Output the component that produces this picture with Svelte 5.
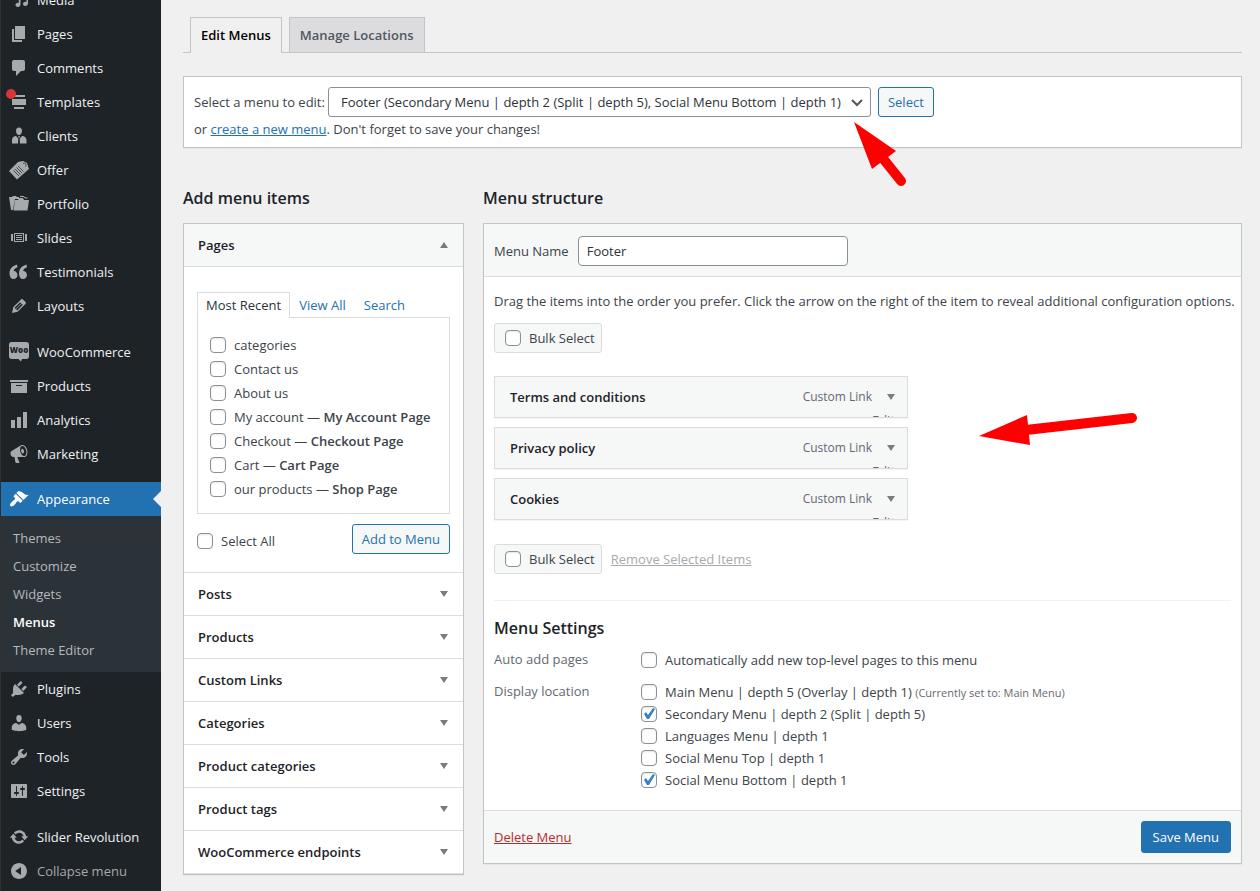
<script lang="ts">
    type MenuEntry = { label: string; icon: string; gap?: boolean; notice?: boolean }

    const icons: Record<string, string> = {
        media: "M9 5.5L19 3v10.2c0 1.5-1.100 2.800-2.700 2.800-1.300 0-2.300-.8-2.300-2s1-2.200 2.300-2.200c.5 0 .9.100 1.200.300V6.500l-6 1.500v6.200c0 1.500-1.100 2.800-2.600 2.800-1.300 0-2.400-.8-2.400-2s1-2.200 2.300-2.200c.5 0 .9.100 1.200.300z",
        pages: "M6 15V2h10v13H6zm-1 1h8v2H3V5h2v11z",
        comments: "M5 2h9c1.1 0 2 .9 2 2v7c0 1.1-.9 2-2 2h-2l-5 5v-5H5c-1.1 0-2-.9-2-2V4c0-1.1.9-2 2-2z",
        templates: "M5 3h11v2H5zM3 7h14v6H3zM5 15h10v2H5z",
        clients: "M10 1.500c2 0 3 1.500 3 3.400S11.800 9 10 9 7 6.800 7 4.900s1-3.400 3-3.400zM7 10l2.300 2.500L9 17.500H3V14c0-2.500 2-4 4-4zm6 0c2 0 4.500 1.500 4.500 4v3.500H11l-.3-5zm-3.800 0h1.600l-.4 1.800h-.8z",
        slides: "M2 6h2v7H2zM16 6h2v7h-2zM5 5h10v9H5zm1 1v7h8V6zm1 1h6v1H7zm0 2h6v1H7zm0 2h6v1H7z",
        testimonials: "M8 2.500C3 4 .5 7 .5 11.500c0 3.500 1.500 5.500 4 5.500 2.400 0 4-1.700 4-4S6.900 9 4.700 9c.3-2 1.500-3 3.800-3.800zM17.500 2.500C12.500 4 10 7 10 11.500c0 3.500 1.500 5.500 4 5.500 2.400 0 4-1.700 4-4s-1.600-4-3.800-4c.3-2 1.500-3 3.800-3.800z",
        layouts: "M13.89 3.39l2.71 2.72c.46.46.42 1.24.03 1.64l-8.01 8.02-5.56 1.16 1.16-5.58s7.6-7.63 7.99-8.03c.39-.39 1.22-.39 1.68.07zm-2.73 2.79l-5.59 5.61 1.11 1.11 5.54-5.65zm-2.97 8.23l5.58-5.6-1.07-1.08-5.59 5.6z",
        products: "M19 4v2H1V4h18zM2 7h16v10H2V7zm11 3V9H7v1h6z",
        analytics: "M18 18V2h-4v16h4zm-6 0V7H8v11h4zm-6 0v-8H2v8h4z",
        marketing: "M18.15 5.94c.46 1.62.38 3.22-.02 4.48-.42 1.28-1.26 2.18-2.3 2.48-.16.06-.26.06-.4.06-.06.02-.12.02-.18.02-.06.02-.14.02-.22.02h-6.8l2.22 5.5c.02.14-.06.26-.14.34-.08.1-.24.16-.34.16H6.95c-.1 0-.26-.06-.34-.16-.08-.08-.16-.2-.14-.34l-1-5.5H4.25l-.02-.02c-.5.06-1.08-.18-1.54-.62s-.88-1.08-1.06-1.88c-.24-.8-.2-1.56-.02-2.2.18-.62.58-1.08 1.06-1.3l.02-.02 9-5.4c.1-.06.18-.1.24-.16.06-.04.14-.08.24-.12.16-.08.28-.12.5-.18 1.04-.3 2.24.1 3.22.98s1.84 2.24 2.26 3.86zm-2.58 5.98h-.02c.4-.1.74-.34 1.04-.7.58-.7.86-1.76.86-3.04 0-.64-.1-1.3-.28-1.98-.34-1.36-1.02-2.5-1.78-3.24s-1.68-1.1-2.46-.88c-.82.22-1.4.96-1.7 2-.32 1.04-.28 2.36.06 3.72.38 1.36 1 2.5 1.8 3.24.78.74 1.62 1.1 2.48.88zm-2.54-7.08c.22-.04.42-.02.62.04.38.16.76.48 1.02 1s.42 1.2.42 1.78c0 .3-.04.56-.12.8-.18.48-.44.84-.86.94-.34.1-.8-.06-1.14-.4s-.64-.86-.78-1.5c-.18-.62-.12-1.24.02-1.72s.48-.84.82-.94z",
        appearance: "M14.48 11.06L7.41 3.99l1.5-1.5c.5-.56 2.3-.47 3.51.32 1.21.8 1.43 1.28 2.91 2.1 1.18.64 2.45 1.26 4.45.85zm-.71.71L6.7 4.7 4.93 6.47c-.39.39-.39 1.02 0 1.41l1.06 1.06c.39.39.39 1.03 0 1.42-.6.6-1.43 1.11-2.21 1.69-.35.26-.7.53-1.01.84C1.43 14.23.4 16.08 1.4 17.07c.99 1 2.84-.03 4.18-1.36.31-.31.58-.66.85-1.02.57-.78 1.08-1.61 1.69-2.21.39-.39 1.02-.39 1.41 0l1.06 1.06c.39.39 1.02.39 1.41 0z",
        plugins: "M13.11 4.36L9.87 7.6 8 5.73l3.24-3.24c.35-.34 1.05-.2 1.56.32.52.51.66 1.21.31 1.55zm-8 1.77l.91-1.12 9.01 9.01-1.19.84c-.71.71-2.63 1.16-3.82 1.16H6.14L4.9 17.26c-.59.59-1.54.59-2.12 0-.59-.58-.59-1.53 0-2.12l1.24-1.24v-3.88c0-1.13.4-3.19 1.09-3.89zm7.26 3.97l3.24-3.24c.34-.35 1.04-.21 1.55.31.52.51.66 1.21.31 1.55l-3.24 3.25z",
        users: "M10 9.25c-2.27 0-2.73-3.44-2.73-3.44C7 4.02 7.82 2 9.97 2c2.16 0 2.98 2.02 2.71 3.81 0 0-.41 3.44-2.68 3.44zm0 2.57L12.72 10c2.39 0 4.52 2.33 4.52 4.53v2.49s-3.65 1.13-7.24 1.13c-3.65 0-7.24-1.13-7.24-1.13v-2.49c0-2.25 1.94-4.48 4.47-4.48z",
        tools: "M16.68 9.77c-1.34 1.34-3.3 1.67-4.95.99l-5.41 6.52c-.99.99-2.59.99-3.58 0s-.99-2.59 0-3.57l6.52-5.42c-.68-1.65-.35-3.61.99-4.95 1.28-1.28 3.12-1.62 4.72-1.06l-2.89 2.89 2.82 2.82 2.86-2.87c.53 1.58.18 3.39-1.08 4.65zM3.81 16.21c.4.39 1.04.39 1.43 0 .4-.4.4-1.04 0-1.43-.39-.4-1.03-.4-1.43 0-.39.39-.39 1.03 0 1.43z",
        settings: "M18 16V4c0-.55-.45-1-1-1H3c-.55 0-1 .45-1 1v12c0 .55.45 1 1 1h14c.55 0 1-.45 1-1zM8 11h1c.55 0 1 .45 1 1s-.45 1-1 1H8v1.5c0 .28-.22.5-.5.5s-.5-.22-.5-.5V13H6c-.55 0-1-.45-1-1s.45-1 1-1h1V5.5c0-.28.22-.5.5-.5s.5.22.5.5V11zm5-2h-1c-.55 0-1-.45-1-1s.45-1 1-1h1V5.5c0-.28.22-.5.5-.5s.5.22.5.5V7h1c.55 0 1 .45 1 1s-.45 1-1 1h-1v5.5c0 .28-.22.5-.5.5s-.5-.22-.5-.5V9z",
        revolution: "M10.2 3.28c3.53 0 6.43 2.61 6.92 6h2.08l-3.5 4-3.5-4h2.32c-.45-1.97-2.21-3.45-4.32-3.45-1.45 0-2.73.71-3.54 1.78L4.95 5.66C6.23 4.2 8.11 3.28 10.2 3.28zm-.4 13.44c-3.52 0-6.43-2.61-6.92-6H.8l3.5-4c1.17 1.33 2.33 2.67 3.5 4H5.48c.45 1.97 2.21 3.45 4.32 3.45 1.45 0 2.73-.71 3.54-1.78l1.71 1.95c-1.28 1.46-3.15 2.38-5.25 2.38z",
        collapse: "M10 2c4.400 0 8 3.600 8 8s-3.600 8-8 8-8-3.600-8-8 3.600-8 8-8zm2 12V6l-5.800 4z",
    }

    const topEntries: MenuEntry[] = [
        { label: "Media", icon: "media" },
        { label: "Pages", icon: "pages" },
        { label: "Comments", icon: "comments" },
        { label: "Templates", icon: "templates", notice: true },
        { label: "Clients", icon: "clients" },
        { label: "Offer", icon: "offer" },
        { label: "Portfolio", icon: "portfolio" },
        { label: "Slides", icon: "slides" },
        { label: "Testimonials", icon: "testimonials" },
        { label: "Layouts", icon: "layouts" },
        { label: "WooCommerce", icon: "woo", gap: true },
        { label: "Products", icon: "products" },
        { label: "Analytics", icon: "analytics" },
        { label: "Marketing", icon: "marketing" },
    ]

    const bottomEntries: MenuEntry[] = [
        { label: "Plugins", icon: "plugins" },
        { label: "Users", icon: "users" },
        { label: "Tools", icon: "tools" },
        { label: "Settings", icon: "settings" },
        { label: "Slider Revolution", icon: "revolution", gap: true },
    ]

    const submenu = ["Themes", "Customize", "Widgets", "Menus", "Theme Editor"]

    const pages = [
        { name: "categories" },
        { name: "Contact us" },
        { name: "About us" },
        { name: "My account", role: "My Account Page" },
        { name: "Checkout", role: "Checkout Page" },
        { name: "Cart", role: "Cart Page" },
        { name: "our products", role: "Shop Page" },
    ]

    const sections = [
        "Posts",
        "Products",
        "Custom Links",
        "Categories",
        "Product categories",
        "Product tags",
        "WooCommerce endpoints",
    ]

    const items = ["Terms and conditions", "Privacy policy", "Cookies"]

    let menuName = $state("Footer")
    let locations = $state([
        { label: "Main Menu | depth 5 (Overlay | depth 1)", note: "(Currently set to: Main Menu)", checked: false },
        { label: "Secondary Menu | depth 2 (Split | depth 5)", note: "", checked: true },
        { label: "Languages Menu | depth 1", note: "", checked: false },
        { label: "Social Menu Top | depth 1", note: "", checked: false },
        { label: "Social Menu Bottom | depth 1", note: "", checked: true },
    ])
</script>

{#snippet icon(name: string)}
    <svg class="icon" viewBox="0 0 20 20" aria-hidden="true">
        {#if name === "woo"}
            <path d="M2.500 0h15C19 0 20 1 20 2.500v12c0 1.500-1 2.500-2.500 2.500H13l-1 2.500L9.500 17h-7C1 17 0 16 0 14.500v-12C0 1 1 0 2.500 0z" />
            <text x="10" y="11" text-anchor="middle">Woo</text>
        {:else if name === "offer"}
            <path d="M9 2l5-1 4 2 2 6L8 19.500 0 11z" />
            <path class="line" d="M4.500 10.500l5.500 5.500M6 9l5.500 5.500M7.500 7.500L13 13M9 6l5.500 5.500M14 3.500c2.500-1 4 .5 2.500 3" />
        {:else if name === "portfolio"}
            <path d="M0 3h3l1-1h3l1 1h2v2H6L4 16H2zM6 6h3l1-2h4l1 2h5l-1.500 10.500h-14z" />
            <path class="outline" d="M11 2.500h4l1 1.500h2.500" />
        {:else}
            <path fill-rule="evenodd" d={icons[name]} />
        {/if}
    </svg>
{/snippet}

{#snippet entryList(entries: MenuEntry[])}
    {#each entries as entry}
        <li class:gap={entry.gap}>
            <a class="entry" href="#{entry.icon}">
                {@render icon(entry.icon)}
                <span>{entry.label}</span>
                {#if entry.notice}<i class="notice"></i>{/if}
            </a>
        </li>
    {/each}
{/snippet}

{#snippet arrow(up = false)}
    <svg class="arrow" class:up={up} viewBox="0 0 8 6" aria-hidden="true"><path d="M0 0h8L4 6z" /></svg>
{/snippet}

<div class="admin">
    <nav class="sidebar" aria-label="Main menu">
        <ul class="menu">
            {@render entryList(topEntries)}
            <li class="appearance">
                <a class="entry current" href="#appearance">
                    {@render icon("appearance")}
                    <span>Appearance</span>
                </a>
                <ul class="submenu">
                    {#each submenu as label}
                        <li><a href="#{label}" class:active={label === "Menus"}>{label}</a></li>
                    {/each}
                </ul>
            </li>
            {@render entryList(bottomEntries)}
            <li>
                <button class="entry collapse" type="button">
                    {@render icon("collapse")}
                    <span>Collapse menu</span>
                </button>
            </li>
        </ul>
    </nav>

    <main>
        <div class="tabs">
            <a class="tab selected" href="#edit">Edit Menus</a>
            <a class="tab" href="#locations">Manage Locations</a>
        </div>

        <div class="manage">
            <div class="pick">
                <label for="menu-select">Select a menu to edit:</label>
                <div class="select">
                    <select id="menu-select">
                        <option>Footer (Secondary Menu | depth 2 (Split | depth 5), Social Menu Bottom | depth 1)</option>
                    </select>
                    <svg viewBox="0 0 12 8" aria-hidden="true"><path d="M1 1l5 5 5-5" /></svg>
                </div>
                <button class="button" type="button">Select</button>
            </div>
            <p>or <a href="#create">create a new menu</a>. Don't forget to save your changes!</p>
        </div>

        <div class="columns">
            <section>
                <h2>Add menu items</h2>
                <div class="box accordion">
                    <button class="section-title open" type="button">Pages {@render arrow(true)}</button>
                    <div class="pages">
                        <div class="page-tabs">
                            <a class="selected" href="#recent">Most Recent</a>
                            <a href="#all">View All</a>
                            <a href="#search">Search</a>
                        </div>
                        <div class="page-list">
                            {#each pages as page}
                                <label>
                                    <input type="checkbox" />
                                    <span>{page.name}{#if page.role}&nbsp;— <b>{page.role}</b>{/if}</span>
                                </label>
                            {/each}
                        </div>
                        <div class="page-actions">
                            <label><input type="checkbox" /> <span>Select All</span></label>
                            <button class="button" type="button">Add to Menu</button>
                        </div>
                    </div>
                    {#each sections as section}
                        <button class="section-title" type="button">{section} {@render arrow()}</button>
                    {/each}
                </div>
            </section>

            <section>
                <h2>Menu structure</h2>
                <div class="box">
                    <div class="name-row">
                        <label for="menu-name">Menu Name</label>
                        <input id="menu-name" type="text" bind:value={menuName} />
                    </div>

                    <div class="body">
                        <p class="hint">Drag the items into the order you prefer. Click the arrow on the right of the item to reveal additional configuration options.</p>
                        <label class="bulk"><input type="checkbox" /> <span>Bulk Select</span></label>
                        <ul class="items">
                            {#each items as item}
                                <li>
                                    <span class="item-title">{item}</span>
                                    <span class="item-type">Custom Link</span>
                                    <a class="item-edit" href="#edit-item" aria-label="Edit {item}">
                                        {@render arrow()}
                                        <span>Edit</span>
                                    </a>
                                </li>
                            {/each}
                        </ul>
                        <div class="bulk-row">
                            <label class="bulk"><input type="checkbox" /> <span>Bulk Select</span></label>
                            <a class="remove" href="#remove">Remove Selected Items</a>
                        </div>

                        <div class="settings">
                            <h2>Menu Settings</h2>
                            <fieldset>
                                <legend>Auto add pages</legend>
                                <div>
                                    <label><input type="checkbox" /> <span>Automatically add new top-level pages to this menu</span></label>
                                </div>
                            </fieldset>
                            <fieldset>
                                <legend>Display location</legend>
                                <div>
                                    {#each locations as location}
                                        <label>
                                            <input type="checkbox" bind:checked={location.checked} />
                                            <span>{location.label} {#if location.note}<small>{location.note}</small>{/if}</span>
                                        </label>
                                    {/each}
                                </div>
                            </fieldset>
                        </div>
                    </div>

                    <div class="foot">
                        <a class="delete" href="#delete">Delete Menu</a>
                        <button class="button save" type="button">Save Menu</button>
                    </div>
                </div>
            </section>
        </div>

        <svg class="pointer first" viewBox="0 0 54 66" aria-hidden="true">
            <path d="M1 1l42 29-24 18z" />
            <path class="shaft" d="M28 35l20 25" />
        </svg>
        <svg class="pointer second" viewBox="0 0 160 34" aria-hidden="true">
            <path d="M1 23L49 2l3 30z" />
            <path class="shaft" d="M48 17l106-12" />
        </svg>
    </main>
</div>

<style>
    :global(body) {
        margin: 0;
        background: #f0f0f1;
    }

    .admin {
        display: flex;
        min-height: 100vh;
        color: #3c434a;
        font-family: "Segoe UI", "Open Sans", "Noto Sans", sans-serif;
        font-size: 13px;
        line-height: 20px;
    }

    .admin * {
        box-sizing: border-box;
    }

    button,
    input,
    select {
        font: inherit;
        margin: 0;
    }

    ul {
        list-style: none;
        margin: 0;
        padding: 0;
    }

    p {
        margin: 0;
    }

    a {
        color: #2271b1;
    }

    h2 {
        margin: 0;
        color: #1d2327;
        font-size: 16px;
        font-weight: 600;
        line-height: 24px;
    }

    /* sidebar */
    .sidebar {
        flex: 0 0 161px;
        overflow: hidden;
        background: #1d2327;
        border-left: 1px solid #32302e;
    }

    /* the list is scrolled past its first entries */
    .menu {
        margin-top: -17px;
    }

    .gap {
        margin-top: 12px;
    }

    .appearance {
        margin-top: 11px;
    }

    .entry {
        position: relative;
        display: flex;
        align-items: center;
        gap: 8px;
        width: 100%;
        height: 34px;
        padding: 0 8px;
        border: 0;
        background: none;
        color: #f0f0f1;
        text-decoration: none;
        white-space: nowrap;
    }

    .icon {
        flex: none;
        width: 20px;
        height: 20px;
        fill: #a7aaad;
    }

    .icon text {
        fill: #1d2327;
        font-size: 8px;
        font-weight: 800;
    }

    .icon .line {
        fill: none;
        stroke: #1d2327;
        stroke-width: 0.7;
    }

    .icon .outline {
        fill: none;
        stroke: #a7aaad;
    }

    .notice {
        position: absolute;
        top: 4px;
        left: 5px;
        width: 10px;
        height: 10px;
        border-radius: 50%;
        background: #d63638;
    }

    .current {
        background: #2271b1;
        color: #fff;
    }

    .current .icon {
        fill: #fff;
    }

    .current::after {
        content: "";
        position: absolute;
        right: 0;
        top: 9px;
        border: 8px solid transparent;
        border-left-width: 0;
        border-right-color: #f0f0f1;
    }

    .collapse {
        color: #a7aaad;
    }

    .submenu {
        padding: 8px 0;
        background: #2c3338;
    }

    .submenu a {
        display: block;
        padding: 4px 12px;
        color: #b4b9be;
        text-decoration: none;
    }

    .submenu .active {
        color: #fff;
        font-weight: 600;
    }

    /* content */
    main {
        position: relative;
        flex: 1;
        min-width: 0;
        padding: 17px 18px 16px 22px;
    }

    .tabs {
        display: flex;
        gap: 7px;
        padding: 0 7px;
        border-bottom: 1px solid #c3c4c7;
    }

    .tab {
        padding: 5px 10px;
        border: 1px solid #c3c4c7;
        border-bottom: 0;
        background: #dcdcde;
        color: #50575e;
        font-weight: 600;
        line-height: 24px;
        text-decoration: none;
    }

    .tab.selected {
        margin-bottom: -1px;
        background: #f0f0f1;
        color: #000;
    }

    .manage,
    .box {
        border: 1px solid #c3c4c7;
        background: #fff;
        box-shadow: 0 1px 1px rgba(0, 0, 0, 0.04);
    }

    .manage {
        margin-top: 23px;
        padding: 10px 10px 8px;
    }

    .manage p {
        margin-top: 2px;
    }

    .pick {
        display: flex;
        align-items: center;
    }

    .select {
        position: relative;
        margin: 0 7px 0 3px;
    }

    .select select {
        width: 543px;
        height: 30px;
        padding: 0 24px 0 12px;
        border: 1px solid #8c8f94;
        border-radius: 3px;
        background: #fff;
        color: #2c3338;
        appearance: none;
    }

    .select svg {
        position: absolute;
        top: 12px;
        right: 8px;
        width: 12px;
        height: 8px;
        fill: none;
        stroke: #50575e;
        stroke-width: 2;
        pointer-events: none;
    }

    .button {
        height: 30px;
        padding: 0 9px;
        border: 1px solid #2271b1;
        border-radius: 3px;
        background: #f6f7f7;
        color: #2271b1;
        white-space: nowrap;
    }

    .columns {
        display: grid;
        grid-template-columns: 281px minmax(0, 1fr);
        align-items: start;
        gap: 19px;
        margin-top: 38px;
    }

    .columns section > h2 {
        margin-bottom: 13px;
    }

    .section-title {
        display: flex;
        align-items: center;
        justify-content: space-between;
        width: 100%;
        height: 43px;
        padding: 0 15px 0 14px;
        border: 0;
        border-bottom: 1px solid #dcdcde;
        background: #fff;
        color: #1d2327;
        font-weight: 600;
    }

    .section-title.open {
        background: #f6f7f7;
    }

    .arrow {
        flex: none;
        width: 8px;
        height: 6px;
        fill: #787c82;
    }

    .up {
        transform: rotate(180deg);
    }

    .pages {
        padding: 25px 13px 18px;
        border-bottom: 1px solid #dcdcde;
    }

    .page-tabs {
        display: flex;
    }

    .page-tabs a {
        padding: 2px 8px;
        border: 1px solid transparent;
        border-bottom: 0;
        line-height: 20px;
        text-decoration: none;
    }

    .page-tabs .selected {
        margin-bottom: -1px;
        padding-bottom: 3px;
        border-color: #dcdcde;
        background: #fff;
        color: #2c3338;
    }

    .page-list {
        padding: 15px 12px 12px;
        border: 1px solid #dcdcde;
    }

    label,
    .hint {
        white-space: nowrap;
    }

    .page-list label,
    .page-actions label,
    .bulk,
    .settings label {
        display: flex;
        align-items: center;
        gap: 8px;
    }

    .page-list label {
        height: 24px;
    }

    .page-list b {
        font-weight: 600;
    }

    .page-actions {
        display: flex;
        align-items: center;
        justify-content: space-between;
        margin-top: 10px;
    }

    .page-actions label {
        padding-top: 4px;
    }

    input[type="checkbox"] {
        flex: none;
        width: 16px;
        height: 16px;
        border: 1px solid #8c8f94;
        border-radius: 4px;
        background: #fff;
        box-shadow: inset 0 1px 2px rgba(0, 0, 0, 0.1);
        appearance: none;
    }

    input[type="checkbox"]:checked::before {
        content: "";
        display: block;
        width: 14px;
        height: 14px;
        background: #3582c4;
        clip-path: polygon(11px 1px, 13px 2px, 7px 12px, 5px 12px, 2px 7px, 4px 5px, 6px 8px);
    }

    .name-row {
        display: flex;
        align-items: center;
        gap: 9px;
        padding: 12px 10px 10px;
        border-bottom: 1px solid #dcdcde;
        background: #f6f7f7;
    }

    .name-row input {
        width: 270px;
        height: 30px;
        padding: 0 8px;
        border: 1px solid #8c8f94;
        border-radius: 4px;
        background: #fff;
        color: #2c3338;
    }

    .body {
        padding: 14px 10px 9px;
    }

    .bulk {
        width: fit-content;
        height: 30px;
        padding: 0 6px 0 10px;
        border: 1px solid #dcdcde;
        border-radius: 3px;
        background: #f6f7f7;
    }

    .body > .bulk {
        margin-top: 12px;
    }

    .items {
        display: grid;
        gap: 9px;
        max-width: 414px;
        margin: 23px 0 24px;
    }

    .items li {
        display: flex;
        align-items: center;
        height: 42px;
        padding: 0 12px 0 15px;
        overflow: hidden;
        border: 1px solid #dcdcde;
        background: #f6f7f7;
        box-shadow: 0 1px 1px rgba(0, 0, 0, 0.04);
    }

    .item-title {
        flex: 1;
        color: #1d2327;
        font-weight: 600;
    }

    .item-type {
        color: #646970;
        font-size: 12px;
    }

    .item-edit {
        position: relative;
        display: flex;
        padding-left: 15px;
        color: #646970;
        text-decoration: none;
    }

    /* sits on the clipped edge of the item */
    .item-edit span {
        position: absolute;
        top: 16px;
        right: 0;
    }

    .bulk-row {
        display: flex;
        align-items: center;
        gap: 9px;
    }

    .remove {
        color: #a7aaad;
    }

    .settings {
        margin-top: 26px;
        padding-top: 15px;
        border-top: 1px solid #f0f0f1;
    }

    fieldset {
        display: flex;
        margin: 0 0 10px;
        padding: 0;
        border: 0;
    }

    .settings h2 {
        margin-bottom: 9px;
    }

    legend {
        float: left;
        width: 147px;
        padding: 0;
        color: #646970;
    }

    .settings label {
        height: 22px;
    }

    small {
        color: #646970;
        font-size: 11px;
    }

    .foot {
        display: flex;
        align-items: center;
        justify-content: space-between;
        padding: 10px;
        border-top: 1px solid #dcdcde;
        background: #f6f7f7;
    }

    .delete {
        color: #b32d2e;
    }

    .save {
        height: 32px;
        padding: 0 11px;
        background: #2271b1;
        color: #fff;
    }

    /* pointers drawn over the page */
    .pointer {
        position: absolute;
        fill: #f00;
        pointer-events: none;
    }

    .shaft {
        fill: none;
        stroke: #f00;
        stroke-width: 10;
        stroke-linecap: round;
    }

    .first {
        top: 121px;
        left: 692px;
        width: 54px;
        height: 66px;
    }

    .second {
        top: 413px;
        left: 817px;
        width: 160px;
        height: 34px;
    }
</style>
